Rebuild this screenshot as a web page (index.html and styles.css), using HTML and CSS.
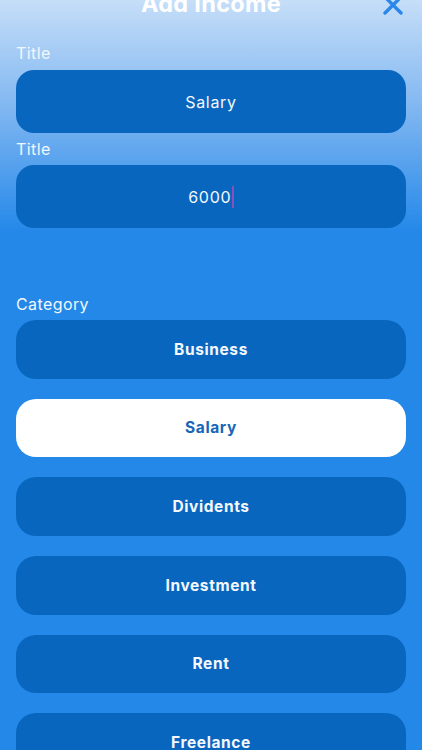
FILE: index.html
```html
<!DOCTYPE html>
<html lang="en">
<head>
<meta charset="utf-8">
<title>Add Income</title>
<link rel="stylesheet" href="styles.css">
</head>
<body>
<div class="screen">
  <header class="header">
    <h1 class="header-title">Add Income</h1>
    <button class="close" aria-label="Close">
      <svg viewBox="0 0 22 22" width="22" height="22"><path d="M3 3 L19 19 M19 3 L3 19" stroke="#2a88e8" stroke-width="3.4" stroke-linecap="round" fill="none"/></svg>
    </button>
  </header>
  <div class="field">
    <label class="label">Title</label>
    <div class="input">Salary</div>
  </div>
  <div class="field">
    <label class="label">Title</label>
    <div class="input">6000<span class="caret"></span></div>
  </div>
  <div class="field category">
    <label class="label">Category</label>
    <div class="options">
      <div class="option">Business</div>
      <div class="option selected">Salary</div>
      <div class="option">Dividents</div>
      <div class="option">Investment</div>
      <div class="option">Rent</div>
      <div class="option">Freelance</div>
    </div>
  </div>
</div>
</body>
</html>
```
FILE: styles.css
```css
html, body {
  margin: 0;
  padding: 0;
  height: 100%;
  overflow: hidden;
}
body {
  background: linear-gradient(to bottom, #c6def8 0px, #7fb6f1 110px, #2488e9 232px, #2488e9 100%);
  background-color: #2488e9;
  font-family: Inter, "Noto Sans", "Liberation Sans", sans-serif;
  color: #f4f8fd;
}
.screen {
  padding: 0 16px;
}
.header {
  position: relative;
  height: 43px;
  display: flex;
  justify-content: center;
}
.header-title {
  margin: -13px 0 0 0;
  font-size: 23.5px;
  line-height: 34px;
  font-weight: 700;
  color: #ffffff;
  letter-spacing: 0.3px;
}
.close {
  position: absolute;
  right: 2px;
  top: -6px;
  width: 22px;
  height: 22px;
  padding: 0;
  border: none;
  background: none;
}
.close svg { display: block; }
.field {
  display: flex;
  flex-direction: column;
}
.field + .field {
  margin-top: 6px;
}
.label {
  font-size: 16px;
  line-height: 20px;
  letter-spacing: 0.4px;
  color: #f2f7fd;
  margin-bottom: 7px;
}
.field + .field .label {
  margin-bottom: 6px;
}
.input {
  height: 63px;
  border-radius: 18px;
  background: #0866bf;
  display: flex;
  align-items: center;
  justify-content: center;
  font-size: 16px;
  letter-spacing: 0.7px;
  color: #f4f8fd;
}
.caret {
  display: inline-block;
  width: 1.5px;
  height: 22px;
  background: #8a4fb8;
  margin-left: 1px;
}
.field.category {
  margin-top: 66px;
}
.options {
  display: flex;
  flex-direction: column;
  gap: 20px;
}
.option {
  height: 58.66px;
  border-radius: 20px;
  background: #0866bf;
  display: flex;
  align-items: center;
  justify-content: center;
  font-size: 15.5px;
  font-weight: 700;
  letter-spacing: 0.6px;
  color: #f4f8fd;
}
.option.selected {
  background: #ffffff;
  color: #1766b8;
}
```
